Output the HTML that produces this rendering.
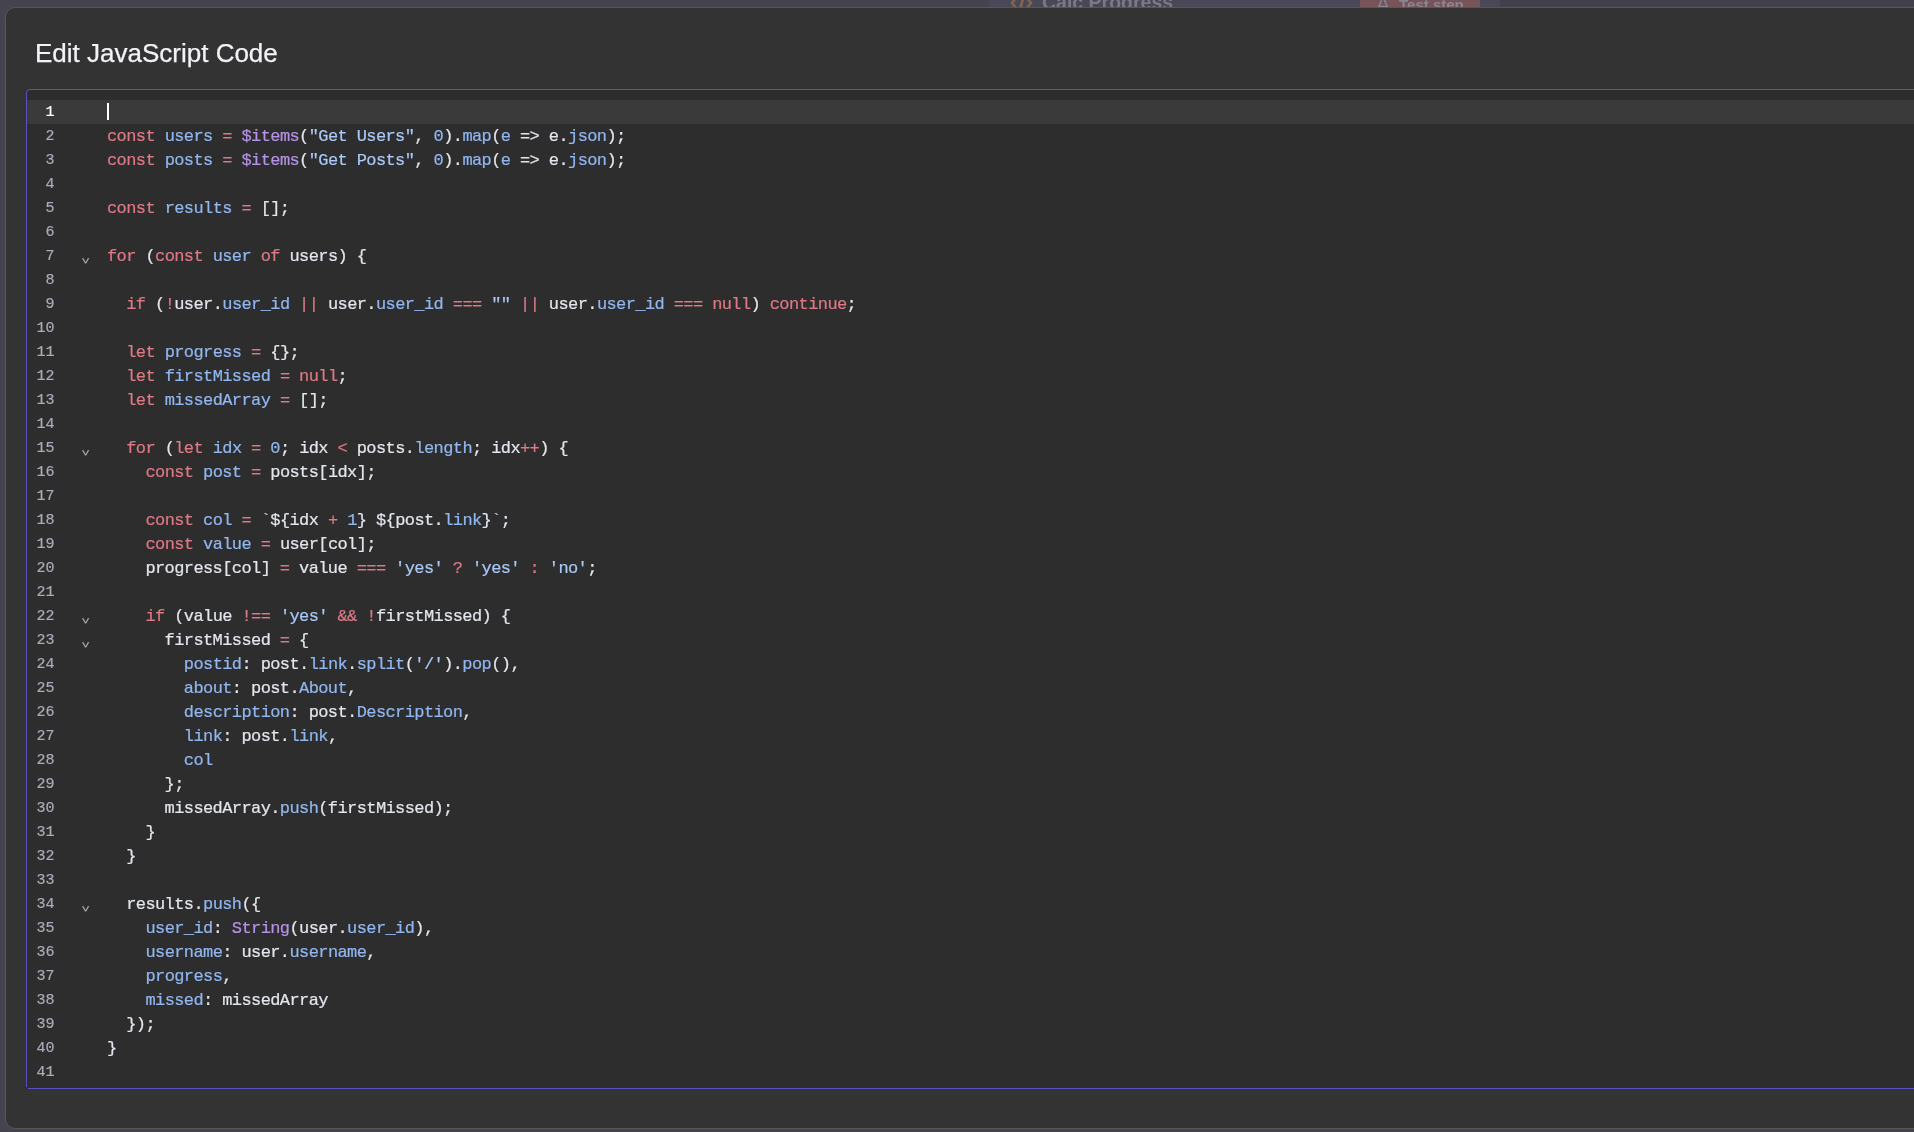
<!DOCTYPE html>
<html><head><meta charset="utf-8"><title>Edit JavaScript Code</title>
<style>
html,body{margin:0;padding:0;width:1914px;height:1132px;overflow:hidden;background:#45434f;}
body{position:relative;font-family:"Liberation Sans",sans-serif;}
.rside{position:absolute;left:1500px;top:0;width:414px;height:20px;background:#42404c;}
.bgpanel{will-change:transform;position:absolute;left:989px;top:0;width:511px;height:20px;background:#4a4856;overflow:hidden;}
.bgpanel .ic{position:absolute;left:21px;top:-1.5px;width:23px;height:12px;}
.bgpanel .nm{position:absolute;left:53px;top:-8px;font-size:19.5px;font-weight:bold;line-height:20px;color:#7a7986;white-space:nowrap;}
.bgpanel .btn{position:absolute;left:371px;top:0;width:120px;height:20px;background:#77535a;}
.bgpanel .btn .fl{position:absolute;left:18px;top:-5px;width:10px;height:14px;}
.bgpanel .btn .tx{position:absolute;left:39px;top:-5.2px;font-size:15px;font-weight:bold;line-height:20px;color:#8a8793;white-space:nowrap;}
.modal{position:absolute;left:5px;top:7px;width:2000px;height:1122px;background:#333333;border:1px solid #575757;border-radius:10px;box-sizing:border-box;}
.title{will-change:transform;position:absolute;left:29.3px;top:30px;font-size:26px;-webkit-text-stroke:0.25px currentColor;line-height:30px;color:#f2f2f7;white-space:nowrap;}
.editor{position:absolute;left:20px;top:81px;width:1960px;height:1000px;background:#2d2d2d;border:1px solid #5b4fc4;border-radius:4px 4px 0 4px;border-bottom-left-radius:0;box-sizing:border-box;overflow:hidden;}
.lines{position:absolute;left:0;top:10px;right:0;will-change:transform;}
.ln{position:relative;height:24px;line-height:24px;font-family:"Liberation Mono",monospace;font-size:17px;letter-spacing:-0.6px;color:#e4e6ee;-webkit-text-stroke:0.2px currentColor;white-space:pre;}
.ln.act{background:#3a3a3a;}
.num{position:absolute;left:0;width:27.5px;text-align:right;color:#a9adba;font-size:15px;letter-spacing:0;top:1px;}
.act .num{color:#ffffff;}
.fd{position:absolute;left:55px;top:13px;width:8px;height:8px;}
.code{position:absolute;left:80px;top:1px;}
.cur{position:absolute;left:0;top:2px;width:2px;height:17px;background:#fff;}
.k,.o{color:#de7985;}
.d,.p,.n{color:#91b7f1;}
.s{color:#a9c9f8;}
.f{color:#b592e6;}
.cover{position:absolute;left:20px;top:1079px;width:2px;height:2px;background:#333333;}

</style></head><body>
<div class="rside"></div><div class="bgpanel"><svg class="ic" viewBox="0 0 23 12"><polyline points="7,-2 2,4 7,10" fill="none" stroke="#806650" stroke-width="2.6"/><polyline points="16,-2 21,4 16,10" fill="none" stroke="#806650" stroke-width="2.6"/><line x1="13.5" y1="-2" x2="9.5" y2="12" stroke="#806650" stroke-width="2.6"/></svg><span class="nm">Calc Progress</span><span class="btn"><svg class="fl" viewBox="0 0 10 14"><path d="M4,-2 L4,4 L0.8,11.5 L9.2,11.5 L6,4 L6,-2" fill="none" stroke="#8a8793" stroke-width="1.4"/></svg><span class="tx">Test step</span></span></div>
<div class="modal">
<div class="title">Edit JavaScript Code</div>
<div class="editor">
<div class="lines">
<div class="ln act"><span class="num">1</span><span class="code"><b class="cur"></b></span></div>
<div class="ln"><span class="num">2</span><span class="code"><span class="k">const</span> <span class="d">users</span> <span class="o">=</span> <span class="f">$items</span>(<span class="s">&quot;Get Users&quot;</span>, <span class="n">0</span>).<span class="p">map</span>(<span class="d">e</span> =&gt; e.<span class="p">json</span>);</span></div>
<div class="ln"><span class="num">3</span><span class="code"><span class="k">const</span> <span class="d">posts</span> <span class="o">=</span> <span class="f">$items</span>(<span class="s">&quot;Get Posts&quot;</span>, <span class="n">0</span>).<span class="p">map</span>(<span class="d">e</span> =&gt; e.<span class="p">json</span>);</span></div>
<div class="ln"><span class="num">4</span><span class="code"></span></div>
<div class="ln"><span class="num">5</span><span class="code"><span class="k">const</span> <span class="d">results</span> <span class="o">=</span> [];</span></div>
<div class="ln"><span class="num">6</span><span class="code"></span></div>
<div class="ln"><span class="num">7</span><svg class="fd" viewBox="0 0 8 8"><polyline points="0.6,1.1 3.6,6.2 6.6,1.1" stroke-linejoin="bevel" fill="none" stroke="#a9adba" stroke-width="1.15"/></svg><span class="code"><span class="k">for</span> (<span class="k">const</span> <span class="d">user</span> <span class="k">of</span> users) {</span></div>
<div class="ln"><span class="num">8</span><span class="code"></span></div>
<div class="ln"><span class="num">9</span><span class="code">  <span class="k">if</span> (<span class="o">!</span>user.<span class="p">user_id</span> <span class="o">||</span> user.<span class="p">user_id</span> <span class="o">===</span> <span class="s">&quot;&quot;</span> <span class="o">||</span> user.<span class="p">user_id</span> <span class="o">===</span> <span class="k">null</span>) <span class="k">continue</span>;</span></div>
<div class="ln"><span class="num">10</span><span class="code"></span></div>
<div class="ln"><span class="num">11</span><span class="code">  <span class="k">let</span> <span class="d">progress</span> <span class="o">=</span> {};</span></div>
<div class="ln"><span class="num">12</span><span class="code">  <span class="k">let</span> <span class="d">firstMissed</span> <span class="o">=</span> <span class="k">null</span>;</span></div>
<div class="ln"><span class="num">13</span><span class="code">  <span class="k">let</span> <span class="d">missedArray</span> <span class="o">=</span> [];</span></div>
<div class="ln"><span class="num">14</span><span class="code"></span></div>
<div class="ln"><span class="num">15</span><svg class="fd" viewBox="0 0 8 8"><polyline points="0.6,1.1 3.6,6.2 6.6,1.1" stroke-linejoin="bevel" fill="none" stroke="#a9adba" stroke-width="1.15"/></svg><span class="code">  <span class="k">for</span> (<span class="k">let</span> <span class="d">idx</span> <span class="o">=</span> <span class="n">0</span>; idx <span class="o">&lt;</span> posts.<span class="p">length</span>; idx<span class="o">++</span>) {</span></div>
<div class="ln"><span class="num">16</span><span class="code">    <span class="k">const</span> <span class="d">post</span> <span class="o">=</span> posts[idx];</span></div>
<div class="ln"><span class="num">17</span><span class="code"></span></div>
<div class="ln"><span class="num">18</span><span class="code">    <span class="k">const</span> <span class="d">col</span> <span class="o">=</span> <span class="s">`</span>${idx <span class="o">+</span> <span class="n">1</span>}<span class="s"> </span>${post.<span class="p">link</span>}<span class="s">`</span>;</span></div>
<div class="ln"><span class="num">19</span><span class="code">    <span class="k">const</span> <span class="d">value</span> <span class="o">=</span> user[col];</span></div>
<div class="ln"><span class="num">20</span><span class="code">    progress[col] <span class="o">=</span> value <span class="o">===</span> <span class="s">&#x27;yes&#x27;</span> <span class="o">?</span> <span class="s">&#x27;yes&#x27;</span> <span class="o">:</span> <span class="s">&#x27;no&#x27;</span>;</span></div>
<div class="ln"><span class="num">21</span><span class="code"></span></div>
<div class="ln"><span class="num">22</span><svg class="fd" viewBox="0 0 8 8"><polyline points="0.6,1.1 3.6,6.2 6.6,1.1" stroke-linejoin="bevel" fill="none" stroke="#a9adba" stroke-width="1.15"/></svg><span class="code">    <span class="k">if</span> (value <span class="o">!==</span> <span class="s">&#x27;yes&#x27;</span> <span class="o">&amp;&amp;</span> <span class="o">!</span>firstMissed) {</span></div>
<div class="ln"><span class="num">23</span><svg class="fd" viewBox="0 0 8 8"><polyline points="0.6,1.1 3.6,6.2 6.6,1.1" stroke-linejoin="bevel" fill="none" stroke="#a9adba" stroke-width="1.15"/></svg><span class="code">      firstMissed <span class="o">=</span> {</span></div>
<div class="ln"><span class="num">24</span><span class="code">        <span class="p">postid</span>: post.<span class="p">link</span>.<span class="p">split</span>(<span class="s">&#x27;/&#x27;</span>).<span class="p">pop</span>(),</span></div>
<div class="ln"><span class="num">25</span><span class="code">        <span class="p">about</span>: post.<span class="p">About</span>,</span></div>
<div class="ln"><span class="num">26</span><span class="code">        <span class="p">description</span>: post.<span class="p">Description</span>,</span></div>
<div class="ln"><span class="num">27</span><span class="code">        <span class="p">link</span>: post.<span class="p">link</span>,</span></div>
<div class="ln"><span class="num">28</span><span class="code">        <span class="p">col</span></span></div>
<div class="ln"><span class="num">29</span><span class="code">      };</span></div>
<div class="ln"><span class="num">30</span><span class="code">      missedArray.<span class="p">push</span>(firstMissed);</span></div>
<div class="ln"><span class="num">31</span><span class="code">    }</span></div>
<div class="ln"><span class="num">32</span><span class="code">  }</span></div>
<div class="ln"><span class="num">33</span><span class="code"></span></div>
<div class="ln"><span class="num">34</span><svg class="fd" viewBox="0 0 8 8"><polyline points="0.6,1.1 3.6,6.2 6.6,1.1" stroke-linejoin="bevel" fill="none" stroke="#a9adba" stroke-width="1.15"/></svg><span class="code">  results.<span class="p">push</span>({</span></div>
<div class="ln"><span class="num">35</span><span class="code">    <span class="p">user_id</span>: <span class="f">String</span>(user.<span class="p">user_id</span>),</span></div>
<div class="ln"><span class="num">36</span><span class="code">    <span class="p">username</span>: user.<span class="p">username</span>,</span></div>
<div class="ln"><span class="num">37</span><span class="code">    <span class="p">progress</span>,</span></div>
<div class="ln"><span class="num">38</span><span class="code">    <span class="p">missed</span>: missedArray</span></div>
<div class="ln"><span class="num">39</span><span class="code">  });</span></div>
<div class="ln"><span class="num">40</span><span class="code">}</span></div>
<div class="ln"><span class="num">41</span><span class="code"></span></div>
</div>
</div>
<div class="cover"></div>
</div>
</body></html>
